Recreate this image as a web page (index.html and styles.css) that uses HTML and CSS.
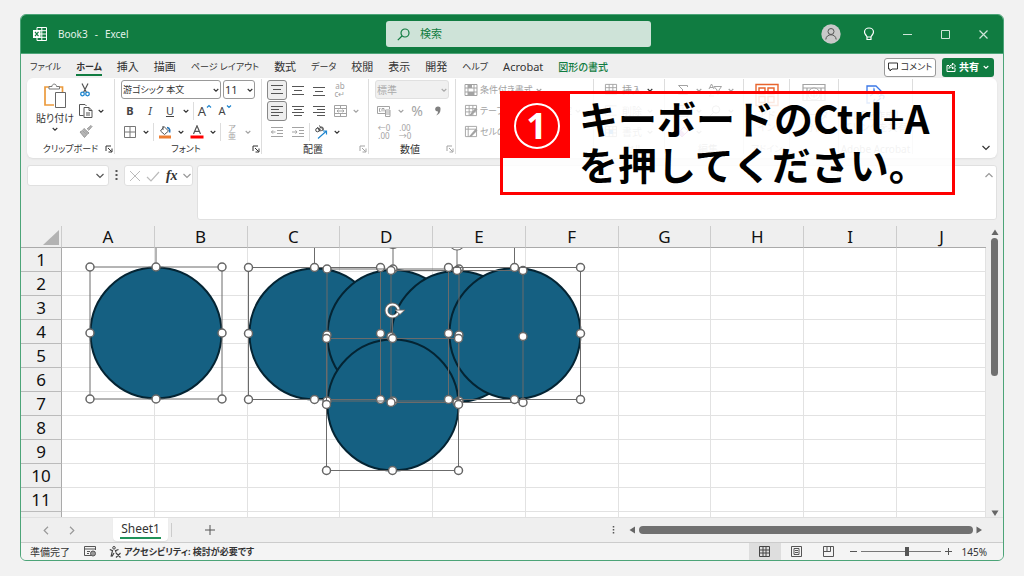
FILE: index.html
```html
<!DOCTYPE html>
<html lang="ja">
<head>
<meta charset="utf-8">
<meta name="viewport" content="width=device-width, initial-scale=1">
<title>Book3 - Excel</title>
<link rel="stylesheet" href="styles.css">
</head>
<body>
<svg class="defs" aria-hidden="true">
  <defs>
    <symbol id="chev" viewBox="0 0 8 8"><path d="M1.700 3 4 5.200 6.300 3" fill="none" stroke="currentColor" stroke-width="1.100"/></symbol>
    <symbol id="launch" viewBox="0 0 8 8"><path d="M1 6V1h5M3 3l3.600 3.600M7 3.500V7H3.500" fill="none" stroke="currentColor" stroke-width="1"/></symbol>
    <symbol id="table" viewBox="0 0 14 14"><path d="M1 1.500h12v11H1zM1 5h12M1 8.500h12M5 1.500v11M9 1.500v11" fill="none" stroke="currentColor"/></symbol>
    <g id="frame">
      <path d="M66-21V0M0 0h132v132H0z" class="frame-line"/>
      <circle cx="66" cy="-28" r="6" class="rotor"/>
      <circle cx="66" cy="-28" r="6" class="rotor-in"/>
      <g class="handle">
        <circle r="4"/><circle cx="66" r="4"/><circle cx="132" r="4"/>
        <circle cy="66" r="4"/><circle cx="132" cy="66" r="4"/>
        <circle cy="132" r="4"/><circle cx="66" cy="132" r="4"/><circle cx="132" cy="132" r="4"/>
      </g>
    </g>
  </defs>
</svg>

<div class="window">
  <header class="titlebar">
    <div class="doc">
      <svg width="14" height="14" viewBox="0 0 14 14"><path d="M4 .5h9.500v13H4zM4 3.700h9.500M4 7h9.500M4 10.300h9.500M8.800.5v13" fill="none" stroke="#fff"/><path d="M0 3h7.500v8H0z" fill="#fff"/><path d="m2 4.800 3.500 4.400M5.500 4.800 2 9.200" stroke="#107c41" stroke-width="1.200"/></svg>
      <span>Book3</span><span>-</span><span>Excel</span>
    </div>
    <label class="search">
      <svg width="13" height="13" viewBox="0 0 13 13"><circle cx="8" cy="5" r="4" fill="none" stroke="currentColor" stroke-width="1.200"/><path d="M5 8 .8 12.200" stroke="currentColor" stroke-width="1.200"/></svg>
      <input type="search" placeholder="検索" aria-label="検索">
    </label>
    <div class="winbtns">
      <button aria-label="アカウント"><svg width="20" height="20" viewBox="0 0 20 20"><circle cx="10" cy="10" r="9.700" fill="#c9c9c9"/><circle cx="10" cy="7.500" r="3" fill="none" stroke="#555"/><path d="M4.800 15.500c.4-6.300 10-6.300 10.400 0" fill="none" stroke="#555"/></svg></button>
      <button aria-label="ヒント"><svg width="12" height="15" viewBox="0 0 12 15"><path d="M4 10C3.800 8.500 1.500 7.500 1.500 5a4.500 4 0 0 1 9 0c0 2.500-2.300 3.500-2.500 5zM4 10v2.500h4V10" fill="none" stroke="#fff" stroke-width="1.200"/></svg></button>
      <button aria-label="最小化"><svg width="9" height="9"><path d="M0 4.500h9" stroke="#cfe5d9"/></svg></button>
      <button aria-label="最大化"><svg width="9" height="9"><path d="M.5.500h8v8h-8z" fill="none" stroke="#cfe5d9"/></svg></button>
      <button aria-label="閉じる"><svg width="9" height="9"><path d="m.5.500 8 8m0-8-8 8" stroke="#cfe5d9" stroke-width="1.200"/></svg></button>
    </div>
  </header>

  <nav class="tabs">
    <a href="#" class="kana">ファイル</a><a href="#" class="kana on">ホーム</a><a href="#">挿入</a><a href="#">描画</a><a href="#" class="kana">ページ レイアウト</a><a href="#">数式</a><a href="#" class="kana">データ</a><a href="#">校閲</a><a href="#">表示</a><a href="#">開発</a><a href="#" class="kana">ヘルプ</a><a href="#" class="latin">Acrobat</a><a href="#" class="ctx">図形の書式</a>
    <div class="tab-actions">
      <button class="comment"><svg width="10" height="10" viewBox="0 0 10 10"><path d="M.5 1h9v6H4L2 9V7H.5z" fill="none" stroke="currentColor"/></svg>コメント</button>
      <button class="share"><svg width="10" height="10" viewBox="0 0 10 10"><path d="M3 3.500H1v6h8V6M3 6.500c0-2.500 1.500-3.500 3.500-3.500V1l3 3-3 3V5C5 5 4 5.300 3 6.500z" fill="none" stroke="currentColor"/></svg>共有<svg width="8" height="8"><use href="#chev"/></svg></button>
    </div>
  </nav>

  <section class="ribbon" aria-label="ホーム">
    <div class="group clip">
      <div class="clip-body">
        <button class="paste">
          <svg width="24" height="26" viewBox="0 0 24 26"><path d="M6 4H2v18h9M16 4h3.500v5" fill="none" stroke="#eb9a3c" stroke-width="1.700"/><path d="M6 6V3.500h3C9 .300 13.500.300 13.500 3.500h3V6z" fill="#fff" stroke="#777"/><path d="M12.500 9.500h10v15h-10z" fill="#fff" stroke="#666"/></svg>
          <span>貼り付け</span>
          <svg width="8" height="8"><use href="#chev"/></svg>
        </button>
        <div class="clip-tools">
          <button aria-label="切り取り"><svg width="12" height="14" viewBox="0 0 12 14"><path d="m3 .5 4.500 9M9 .5l-4.500 9" stroke="#555" stroke-width="1.200"/><circle cx="3.500" cy="11" r="1.800" fill="none" stroke="#1f86cf" stroke-width="1.300"/><circle cx="8.500" cy="11" r="1.800" fill="none" stroke="#1f86cf" stroke-width="1.300"/></svg></button>
          <button aria-label="コピー"><svg width="14" height="14" viewBox="0 0 14 14"><path d="M4.500 11.500h-4v-11H6l1.500 1.500M5 3.500h5l3 3v7H5zM10 3.500v3h3M7 9h4M7 11h4" fill="none" stroke="#555"/></svg><svg width="8" height="8"><use href="#chev"/></svg></button>
          <button aria-label="書式のコピー" class="off"><svg width="14" height="13" viewBox="0 0 14 13"><path d="m8 4 4-3.500 1 1L9.500 5.500M5 3.500l5 4.500-1.500 1L4 4.600zM3.500 5.500 1 7l4.500 5.500L8 9.500z" fill="#b5b5b5" stroke="#999"/></svg></button>
        </div>
      </div>
      <div class="caption"><span class="kana">クリップボード</span><button aria-label="クリップボードの設定"><svg width="8" height="8"><use href="#launch"/></svg></button></div>
    </div>

    <div class="group font">
      <div class="row selects">
        <span class="drop wide"><select aria-label="フォント"><option>游ゴシック 本文</option></select><svg width="8" height="8"><use href="#chev"/></svg></span>
        <span class="drop size"><select aria-label="フォント サイズ"><option>11</option></select><svg width="8" height="8"><use href="#chev"/></svg></span>
      </div>
      <div class="row">
        <button class="b letter"><b>B</b></button><button class="b letter"><i>I</i></button><button class="b letter"><u>U</u></button><button class="v" aria-label="下線の種類"><svg width="8" height="8"><use href="#chev"/></svg></button>
        <i class="sep"></i>
        <button class="b letter big" aria-label="拡大">A<svg width="6" height="10" viewBox="0 0 6 10"><path d="m1 3.500 2-2 2 2" fill="none" stroke="#1f86cf" stroke-width="1.200"/></svg></button><button class="b letter" aria-label="縮小">A<svg width="6" height="10" viewBox="0 0 6 10"><path d="m1 1.500 2 2 2-2" fill="none" stroke="#1f86cf" stroke-width="1.200"/></svg></button>
      </div>
      <div class="row">
        <button class="b" aria-label="罫線"><svg width="12" height="12"><path d="M.5.500h11v11H.5zM6 .5v11M.5 6h11" fill="none" stroke="#777"/></svg></button><button class="v" aria-label="罫線の種類"><svg width="8" height="8"><use href="#chev"/></svg></button>
        <i class="sep"></i>
        <button class="b" aria-label="塗りつぶし"><svg width="14" height="14" viewBox="0 0 14 14"><path d="M6 1.500 10.500 6l-4 3.500L2.500 6zM5 1v4" fill="none" stroke="#555"/><path d="M9 2.500c3 .5 3 3 2.500 5" fill="none" stroke="#1f6fb5" stroke-width="1.600"/><path d="M1 10.500h12v3H1z" fill="#ed7d31"/></svg></button><button class="v" aria-label="塗りつぶしの色"><svg width="8" height="8"><use href="#chev"/></svg></button>
        <button class="b" aria-label="フォントの色"><svg width="14" height="14" viewBox="0 0 14 14"><path d="M3.500 9 7 .8 10.500 9M4.700 6.300h4.600" fill="none" stroke="#555" stroke-width="1.200"/><path d="M.5 10.500h13v3H.5z" fill="#f00"/></svg></button><button class="v" aria-label="色の種類"><svg width="8" height="8"><use href="#chev"/></svg></button>
        <i class="sep"></i>
        <button class="b off ruby"><span>ア</span><span>亜</span></button><button class="v off" aria-label="ふりがな"><svg width="8" height="8"><use href="#chev"/></svg></button>
      </div>
      <div class="caption"><span class="kana">フォント</span><button aria-label="フォントの設定"><svg width="8" height="8"><use href="#launch"/></svg></button></div>
    </div>

    <div class="group align">
      <div class="row">
        <button class="b on" aria-label="上揃え"><svg width="12" height="12"><path d="M0 1.500h12M2 5.500h8M0 9.500h12" stroke="#555"/></svg></button><button class="b" aria-label="中央揃え"><svg width="12" height="12"><path d="M0 2.500h12M2 6.500h8M0 10.500h12" stroke="#555"/></svg></button><button class="b" aria-label="下揃え"><svg width="12" height="12"><path d="M0 3.500h12M2 7.500h8M0 11.500h12" stroke="#555"/></svg></button><button class="b off wrap"><span>ab</span><span>c↵</span></button>
      </div>
      <div class="row">
        <button class="b on" aria-label="左揃え"><svg width="12" height="12"><path d="M0 1.500h12M0 4.500h8M0 7.500h12M0 10.500h8" stroke="#555"/></svg></button><button class="b" aria-label="横中央揃え"><svg width="12" height="12"><path d="M0 1.500h12M2 4.500h8M0 7.500h12M2 10.500h8" stroke="#555"/></svg></button><button class="b" aria-label="右揃え"><svg width="12" height="12"><path d="M0 1.500h12M4 4.500h8M0 7.500h12M4 10.500h8" stroke="#555"/></svg></button><button class="b off" aria-label="セルを結合"><svg width="13" height="12"><path d="M.5.500h12v11H.5zM.5 3.500h12M.5 8.500h12M6.500.500v3M6.500 8.500v3M3 6h7M4.500 4.700 3 6l1.500 1.300M8.500 4.700 10 6 8.500 7.300" fill="none" stroke="currentColor"/></svg></button><button class="v off" aria-label="結合の種類"><svg width="8" height="8"><use href="#chev"/></svg></button>
      </div>
      <div class="row">
        <button class="b off" aria-label="インデント解除"><svg width="12" height="12"><path d="M0 1.500h12M6 4.500h6M6 7.500h6M0 10.500h12M0 6h4.500M2 4.300.500 6 2 7.700" fill="none" stroke="currentColor"/></svg></button><button class="b off" aria-label="インデント"><svg width="12" height="12"><path d="M0 1.500h12M7 4.500h5M7 7.500h5M0 10.500h12M0 6h5M3.500 4.300 5 6 3.500 7.700" fill="none" stroke="currentColor"/></svg></button>
        <i class="sep"></i>
        <button class="b" aria-label="方向"><svg width="14" height="14" viewBox="0 0 14 14"><circle cx="3.500" cy="5" r="1.800" fill="none" stroke="#444"/><circle cx="7.500" cy="3.800" r="1.800" fill="none" stroke="#444"/><path d="m3.500 2 2.500 4.500M5 .5l4.500 4.300" stroke="#444"/><path d="M4 13.500 12.500 6M9 6h3.500v3.500" fill="none" stroke="#1f86cf" stroke-width="1.200"/></svg></button><button class="v" aria-label="方向の種類"><svg width="8" height="8"><use href="#chev"/></svg></button>
      </div>
      <div class="caption"><span>配置</span><button class="off" aria-label="配置の設定"><svg width="8" height="8"><use href="#launch"/></svg></button></div>
    </div>

    <div class="group number">
      <div class="row selects">
        <span class="drop full disabled"><select aria-label="表示形式" disabled><option>標準</option></select><svg width="8" height="8"><use href="#chev"/></svg></span>
      </div>
      <div class="row">
        <button class="b off" aria-label="通貨"><svg width="14" height="12" viewBox="0 0 14 12"><path d="M8 8.500H.5v-7h12V4M3.500 3.500h-1v3h1M5 6.500v-3h2v3M8.500 5h4.500v6.500H8.500zM8.500 7H13M8.500 9H13" fill="none" stroke="currentColor"/></svg></button><button class="v off" aria-label="通貨の種類"><svg width="8" height="8"><use href="#chev"/></svg></button><button class="b off percent">%</button><button class="b off" aria-label="桁区切り"><svg width="8" height="12" viewBox="0 0 8 12"><path d="M4 1.500a2.500 2.500 0 0 1 2.500 2.800C6.500 7.500 5 9.500 2 10.500 3.500 9 4 7.800 4 6.500 0 6.500.500 1.500 4 1.500z" fill="#808080"/></svg></button>
      </div>
      <div class="row">
        <button class="b off dec"><span>←0</span><span>.00</span></button><button class="b off dec"><span>.00</span><span>→0</span></button>
      </div>
      <div class="caption"><span>数値</span><button class="off" aria-label="数値の設定"><svg width="8" height="8"><use href="#launch"/></svg></button></div>
    </div>

    <div class="group styles off">
      <button class="row cmd"><svg width="14" height="12" viewBox="0 0 14 12"><path d="M1 .5h12v11H1zM1 4h12M1 8h12M4 .5v11M10 .5v11" fill="none" stroke="currentColor"/><path d="M4 1h4v3H4zM4 8h6v3H4z" fill="currentColor"/></svg><span class="kana">条件付き書式</span><svg width="8" height="8"><use href="#chev"/></svg></button>
      <button class="row cmd"><svg width="14" height="13" viewBox="0 0 14 14"><use href="#table"/><path d="m5 12 7-8 2 2-7 7z" fill="currentColor"/></svg><span class="kana">テーブルとして書式設定</span><svg width="8" height="8"><use href="#chev"/></svg></button>
      <button class="row cmd"><svg width="14" height="13" viewBox="0 0 14 14"><path d="M1 1.500h12v11H1zM1 4.500h12M4 1.500v11" fill="none" stroke="currentColor"/><path d="m5 12 7-8 2 2-7 7z" fill="currentColor"/></svg><span class="kana">セルのスタイル</span><svg width="8" height="8"><use href="#chev"/></svg></button>
      <div class="caption"><span class="kana">スタイル</span></div>
    </div>

    <div class="group cells off">
      <button class="row cmd dark"><svg width="14" height="13"><use href="#table"/></svg><span>挿入</span><svg width="8" height="8"><use href="#chev"/></svg></button>
      <button class="row cmd"><svg width="14" height="13" viewBox="0 0 14 14"><path d="M1 2h12M1 12h12M1 2v10M4 5l5 5m0-5-5 5" stroke="currentColor"/></svg><span>削除</span><svg width="8" height="8"><use href="#chev"/></svg></button>
      <button class="row cmd"><svg width="14" height="13"><use href="#table"/><path d="M5 5h4v4H5z" fill="#5ba3e0"/></svg><span>書式</span><svg width="8" height="8"><use href="#chev"/></svg></button>
      <div class="caption"><span class="kana">セル</span></div>
    </div>

    <div class="group edit off">
      <div class="row"><button class="b" aria-label="合計"><svg width="12" height="12"><path d="M10.500 3V1.500h-9L6 6l-4.500 4.500h9V9" fill="none" stroke="currentColor"/></svg></button><button class="v" aria-label="合計の種類"><svg width="8" height="8"><use href="#chev"/></svg></button><button class="b" aria-label="並べ替え"><svg width="14" height="14"><path d="m1 6 2.500-5L6 6M2 4.500h3M1 8.500h5L1 13h5M6 3.500h7.500L11 7v4H9V7z" fill="none" stroke="currentColor"/></svg></button><button class="v" aria-label="フィルター"><svg width="8" height="8"><use href="#chev"/></svg></button></div>
      <div class="row"><button class="b" aria-label="フィル"><svg width="12" height="12"><path d="M1 .5h10v11H1zM6 2v7M3.500 6.500 6 9l2.500-2.500" fill="none" stroke="currentColor"/></svg></button><button class="v" aria-label="フィルの種類"><svg width="8" height="8"><use href="#chev"/></svg></button><button class="b" aria-label="検索と選択"><svg width="12" height="12"><circle cx="7" cy="4.500" r="3.700" fill="none" stroke="currentColor"/><path d="m4.500 7.500-4 4" stroke="currentColor"/></svg></button><button class="v" aria-label="選択の種類"><svg width="8" height="8"><use href="#chev"/></svg></button></div>
      <div class="row"><button class="b" aria-label="クリア"><svg width="12" height="12"><path d="m1 7 6-6 4 4-6 6z" fill="none" stroke="#b54bbf"/><path d="m1 7 3-3 4 4-3 3z" fill="#c98bd0"/></svg></button><button class="v" aria-label="クリアの種類"><svg width="8" height="8"><use href="#chev"/></svg></button></div>
      <div class="caption"><span>編集</span></div>
    </div>

    <div class="group addin off">
      <button class="tall"><svg width="24" height="24" viewBox="0 0 24 24"><path d="M1 1.500h22v21H1zM4 5h6v6H4zM13 5h6v6h-6zM4 13.500h6v6H4zM13 13.500h6v6h-6z" fill="none" stroke="#e8642c" stroke-width="1.400"/></svg><span>アド<br>イン</span></button>
      <div class="caption"><span class="kana">アドイン</span></div>
    </div>

    <div class="group analyze off">
      <button class="tall"><svg width="24" height="24" viewBox="0 0 24 24"><path d="M1 1.500h22v16H1zM1 5h22M5 5v12M19 5v12" fill="none" stroke="currentColor" stroke-width="1.200"/><circle cx="12" cy="11" r="6" fill="#fff" stroke="currentColor"/><path d="M9 9h6v4H9zM12 7v8" fill="none" stroke="currentColor"/></svg><span>データ<br>分析</span></button>
      <div class="caption"></div>
    </div>

    <div class="group adobe off">
      <button class="tall"><svg width="24" height="24" viewBox="0 0 24 24"><path d="M6 20H3V3h9l5 5v4M6 13c3-1 5-5 4-7-1 3 2 5 5 5" fill="none" stroke="#3b78e7" stroke-width="1.300"/><path d="m12 19 5-4m-6 1c-3 3 0 7 3 4m1-6c3-4 7-1 4 2" fill="none" stroke="#3b78e7" stroke-width="1.300"/></svg><span>PDFを作成し<br>てリンクを共有</span></button>
      <div class="caption"><span class="latin">Adobe Acrobat</span></div>
    </div>

    <button class="collapse" aria-label="リボンを折りたたむ"><svg width="10" height="8" viewBox="0 0 10 8"><path d="m1.500 2 3.500 3.500L8.500 2" fill="none" stroke="currentColor" stroke-width="1.200"/></svg></button>
  </section>

  <section class="formula">
    <div class="box namebox"><input aria-label="名前ボックス"><svg width="10" height="8" viewBox="0 0 10 8"><path d="m1.500 2 3.500 3.500L8.500 2" fill="none" stroke="#555" stroke-width="1.200"/></svg></div>
    <svg class="dots" width="3" height="12"><path d="M1.500 1v11" stroke="#555" stroke-width="2" stroke-dasharray="2 2"/></svg>
    <div class="box fxbox">
      <button aria-label="キャンセル"><svg width="12" height="12"><path d="m1 1 10 10M11 1 1 11" stroke="#bbb"/></svg></button>
      <button aria-label="入力"><svg width="14" height="12"><path d="m1 7 4 4 8-9" fill="none" stroke="#bbb" stroke-width="1.200"/></svg></button>
      <button class="fx">fx</button>
      <svg width="8" height="8" viewBox="0 0 8 8"><path d="m.5 2 3.500 3.500L7.500 2" fill="none" stroke="#999" stroke-width="1.200"/></svg>
    </div>
    <div class="box entry"><textarea aria-label="数式バー"></textarea><svg width="10" height="8" viewBox="0 0 10 8"><path d="m1.500 6 3.500-3.500L8.500 6" fill="none" stroke="#999" stroke-width="1.200"/></svg></div>
  </section>

  <main class="sheet">
    <div class="canvas">
      <table>
        <thead><tr><th class="corner"><svg width="16" height="15"><path d="M16 0v15H0z" fill="#b3b3b3"/></svg></th><th>A</th><th>B</th><th>C</th><th>D</th><th>E</th><th>F</th><th>G</th><th>H</th><th>I</th><th class="last">J</th></tr></thead>
        <tbody>
          <tr><th>1</th><td></td><td></td><td></td><td></td><td></td><td></td><td></td><td></td><td></td><td></td></tr>
          <tr><th>2</th><td></td><td></td><td></td><td></td><td></td><td></td><td></td><td></td><td></td><td></td></tr>
          <tr><th>3</th><td></td><td></td><td></td><td></td><td></td><td></td><td></td><td></td><td></td><td></td></tr>
          <tr><th>4</th><td></td><td></td><td></td><td></td><td></td><td></td><td></td><td></td><td></td><td></td></tr>
          <tr><th>5</th><td></td><td></td><td></td><td></td><td></td><td></td><td></td><td></td><td></td><td></td></tr>
          <tr><th>6</th><td></td><td></td><td></td><td></td><td></td><td></td><td></td><td></td><td></td><td></td></tr>
          <tr><th>7</th><td></td><td></td><td></td><td></td><td></td><td></td><td></td><td></td><td></td><td></td></tr>
          <tr><th>8</th><td></td><td></td><td></td><td></td><td></td><td></td><td></td><td></td><td></td><td></td></tr>
          <tr><th>9</th><td></td><td></td><td></td><td></td><td></td><td></td><td></td><td></td><td></td><td></td></tr>
          <tr><th>10</th><td></td><td></td><td></td><td></td><td></td><td></td><td></td><td></td><td></td><td></td></tr>
          <tr><th>11</th><td></td><td></td><td></td><td></td><td></td><td></td><td></td><td></td><td></td><td></td></tr>
          <tr><th></th><td></td><td></td><td></td><td></td><td></td><td></td><td></td><td></td><td></td><td></td></tr>
        </tbody>
      </table>
      <svg class="shapes" role="img" aria-label="選択された円">
        <g class="disc">
          <circle cx="95" cy="85" r="65.500"/>
          <circle cx="254" cy="86" r="65.500"/>
          <circle cx="332" cy="87.500" r="65.500"/>
          <circle cx="396" cy="88.500" r="65.500"/>
          <circle cx="454" cy="85.500" r="65.500"/>
          <circle cx="332" cy="157" r="65.500"/>
        </g>
        <use href="#frame" x="29" y="19"/>
        <use href="#frame" x="187.500" y="19.500"/>
        <use href="#frame" x="266" y="21"/>
        <use href="#frame" x="330" y="22.500"/>
        <use href="#frame" x="387.500" y="19.500"/>
        <use href="#frame" x="265.500" y="90.500"/>
        <path d="M334 62h10l-5 4.500z" class="rotor-tip"/>
      </svg>
    </div>
    <div class="vscroll">
      <button aria-label="上へ"><svg width="8" height="7"><path d="M4 .5 7.500 6h-7z" fill="#666"/></svg></button>
      <div class="vtrack"><div class="vthumb"></div></div>
      <button aria-label="下へ"><svg width="8" height="7"><path d="M4 6 .5.500h7z" fill="#666"/></svg></button>
    </div>
  </main>

  <footer class="sheetbar">
    <div class="sheetnav">
      <button aria-label="前のシート"><svg width="6" height="9"><path d="M5 .8 1.200 4.500 5 8.200" fill="none" stroke="#999" stroke-width="1.200"/></svg></button>
      <button aria-label="次のシート"><svg width="6" height="9"><path d="m1 .8 3.800 3.700L1 8.200" fill="none" stroke="#999" stroke-width="1.200"/></svg></button>
    </div>
    <button class="sheettab"><span>Sheet1</span></button>
    <i class="tabsep"></i>
    <button class="add" aria-label="新しいシート"><svg width="10" height="10"><path d="M5 0v10M0 5h10" stroke="#555"/></svg></button>
    <svg class="dots" width="3" height="10"><path d="M1.500 1v9" stroke="#555" stroke-width="1.500" stroke-dasharray="1.500 1.500"/></svg>
    <div class="hscroll">
      <button aria-label="左へ"><svg width="7" height="8"><path d="M.5 4 6 .5v7z" fill="#666"/></svg></button>
      <div class="hthumb"></div>
      <button aria-label="右へ"><svg width="7" height="8"><path d="M6 4 .5.500v7z" fill="#666"/></svg></button>
    </div>
  </footer>

  <footer class="status">
    <span class="ready">準備完了</span>
    <svg width="12" height="11" viewBox="0 0 12 11"><path d="M7 9.500H.5v-9h11V4M.5 3h11M3 5.500h3M3 7.500h2" fill="none" stroke="#555"/><circle cx="9" cy="7.500" r="2.500" fill="#999" stroke="#555"/></svg>
    <button class="access"><svg width="12" height="12" viewBox="0 0 12 12"><circle cx="5" cy="1.800" r="1.300" fill="none" stroke="#444"/><path d="m.8 3.500 2.700 1.200-1.500 6M9.500 3.500 6.500 4.700l.5 1.800M3 10.500l2-3.500M7 7l4.500 4.500M11.500 7 7 11.500" fill="none" stroke="#444" stroke-width="1.200"/></svg><span>アクセシビリティ: 検討が必要です</span></button>
    <div class="views">
      <button class="on" aria-label="標準"><svg width="12" height="11"><path d="M.5.500h10v10H.5zM.5 4h10M.5 7h10M4 .5v10M7 .5v10" fill="none" stroke="#444"/></svg></button>
      <button aria-label="ページ レイアウト"><svg width="11" height="11"><path d="M.5.500h10v10H.5zM3 2.500h5v6H3zM4 4.500h3M4 6.500h3" fill="none" stroke="#555"/></svg></button>
      <button aria-label="改ページ プレビュー"><svg width="11" height="11"><path d="M.5.500h10v10H.5zM4 .5v5M7.500.500v5M.5 5.500h7" fill="none" stroke="#555"/></svg></button>
    </div>
    <div class="zoom">
      <button aria-label="縮小"><svg width="7" height="7"><path d="M0 3.500h7" stroke="#555"/></svg></button>
      <input type="range" min="0" max="100" value="58" aria-label="ズーム">
      <button aria-label="拡大"><svg width="7" height="7"><path d="M0 3.500h7M3.500 0v7" stroke="#555"/></svg></button>
      <span>145%</span>
    </div>
  </footer>

  <aside class="callout">
    <div class="step"><span>1</span></div>
    <p>キーボードのCtrl<span class="plus">+</span>A<br>を押してください。</p>
  </aside>
</div>
</body>
</html>
```

FILE: styles.css
```css
* { box-sizing: border-box; }

body {
  margin: 0;
  height: 100vh;
  padding: 14px 20px;
  background: #f2f2f2;
  color: #333;
  font-family: "Noto Sans", "Noto Sans CJK JP", sans-serif;
  font-size: 10px;
  line-height: 14px;
  font-feature-settings: "palt";
}

button, input, select, textarea {
  margin: 0;
  padding: 0;
  border: 0;
  background: none;
  color: inherit;
  font: inherit;
  font-feature-settings: inherit;
}

svg { display: block; flex: none; }
a { color: inherit; text-decoration: none; }

.defs { position: absolute; width: 0; height: 0; }

.window {
  position: relative;
  display: flex;
  flex-direction: column;
  height: 100%;
  max-height: 547px;
  overflow: hidden;
  border: 1px solid #4ca478;
  border-radius: 6px;
  background: #efefef;
}

/* Title bar */
.titlebar {
  display: grid;
  grid-template-columns: 365fr 265fr 352fr;
  align-items: center;
  height: 39px;
  flex: none;
  background: #107c41;
  border-bottom: 1px solid #4ca478;
  color: #e4f2ea;
}
.doc { display: flex; align-items: center; gap: 7px; padding-left: 12px; }
.doc svg { margin-right: 4px; }
.search {
  display: flex;
  align-items: center;
  gap: 10px;
  height: 26px;
  padding-left: 11px;
  border-radius: 3px;
  background: #cee3d8;
  color: #107c41;
  font-size: 11px;
}
.search input { width: 100%; outline: 0; }
.search input::placeholder { color: #107c41; opacity: 1; }
.winbtns { display: flex; justify-content: flex-end; padding-right: 1px; }
.winbtns button { display: grid; place-items: center; width: 38px; height: 30px; }

/* Ribbon tabs */
.tabs {
  display: flex;
  align-items: center;
  gap: 15px;
  height: 24px;
  flex: none;
  padding: 2px 9px 0;
  font-size: 11px;
}
.tabs a { white-space: nowrap; }
.kana { font-size: 9px; }
.latin { font-size: 10px; }
.tabs .latin { font-size: 11px; }
.tabs .on { font-weight: 700; border-bottom: 2px solid #107c41; padding-top: 2px; }
.tabs .ctx { color: #107c41; font-size: 10px; font-weight: 500; }
.tab-actions { display: flex; gap: 6px; margin-left: auto; font-size: 10px; }
.tab-actions button {
  display: flex;
  align-items: center;
  justify-content: center;
  gap: 3px;
  width: 52px;
  height: 19px;
  border-radius: 3px;
  white-space: nowrap;
}
.tab-actions .comment { border: 1px solid #999; background: #fff; font-size: 9px; }
.tab-actions .share { background: #107c41; color: #fff; font-weight: 700; }

/* Ribbon */
.ribbon {
  display: flex;
  height: 80px;
  flex: none;
  margin: 0 6px;
  padding-top: 1px;
  border-radius: 6px;
  background: #fff;
  box-shadow: 0 1px 2px #ddd;
}
.group {
  display: flex;
  flex-direction: column;
  flex: none;
  border-right: 1px solid #ddd;
  margin-bottom: 4px;
}
.off { color: #a3a3a3; }
.row { display: flex; align-items: center; height: 21px; flex: none; }
.b { display: flex; align-items: center; justify-content: center; width: 20px; height: 20px; flex: none; }
.v { display: grid; place-items: center; width: 12px; height: 20px; flex: none; }
.b.on { border: 1px solid #888; border-radius: 3px; background: #eee; }
.sep { width: 1px; height: 18px; margin: 0 1px; background: #ddd; }
.caption {
  display: flex;
  align-items: center;
  height: 10px;
  margin-top: auto;
}
.caption span { flex: 1; text-align: center; white-space: nowrap; }
.caption button { width: 9px; }

.clip { width: 88px; padding-left: 9px; }
.clip-body { display: flex; height: 63px; }
.paste {
  display: flex;
  flex-direction: column;
  align-items: center;
  width: 38px;
  padding-top: 4px;
  white-space: nowrap;
}
.paste span { margin-top: 2px; }
.clip-tools { display: flex; flex-direction: column; padding-left: 3px; }
.clip-tools button { display: flex; align-items: center; height: 21px; gap: 4px; padding-left: 2px; }

.font { width: 147px; padding-left: 5px; }
.selects { gap: 2px; padding-left: 1px; }
.drop { display: grid; align-items: center; height: 19px; }
.drop > * { grid-area: 1 / 1; }
.drop svg { justify-self: end; margin-right: 1px; pointer-events: none; }
.drop select {
  appearance: none;
  width: 100%;
  height: 19px;
  padding: 0 1px;
  border: 1px solid #999;
  border-radius: 3px;
  opacity: 1;
}
.wide { width: 100px; }
.wide select { font-size: 9px; }
.size { width: 32px; }
.full { width: 74px; }
.size select { font-size: 11px; }
.disabled { color: #aaa; }
.disabled select { border-color: #e0e0e0; background: #f0f0f0; color: #aaa; }
.letter { font-size: 11px; color: #444; }
.letter svg { align-self: flex-start; margin-top: 3px; }
.letter.big { font-size: 13px; }
.ruby, .wrap, .dec { flex-direction: column; font-size: 8px; line-height: 8px; }

.align { width: 107px; padding-left: 5px; }
.align .b + .b { margin-left: 1px; }
.number { width: 87px; padding-left: 5px; }
.number .b { margin-right: 1px; }
.percent { font-size: 14px; }
.styles { width: 138px; padding-left: 8px; }
.cmd { gap: 2px; white-space: nowrap; }
.cells { width: 71px; padding-left: 10px; }
.cells .cmd { gap: 4px; }
.dark svg:last-child { color: #333; }
.edit { width: 79px; padding-left: 8px; }
.tall {
  display: flex;
  flex-direction: column;
  align-items: center;
  gap: 2px;
  padding-top: 4px;
  line-height: 12px;
  white-space: nowrap;
}
.addin { width: 46px; }
.analyze { width: 49px; }
.adobe { width: 74px; }
.collapse { margin: auto 6px 6px auto; color: #333; }

/* Formula bar */
.formula { display: flex; gap: 4px; flex: none; height: 55px; margin: 7px 6px 6px; }
.box {
  display: flex;
  align-items: center;
  border: 1px solid #e0e0e0;
  border-radius: 3px;
  background: #fff;
}
.namebox { width: 82px; height: 21px; padding-right: 3px; }
.namebox input { width: 100%; min-width: 0; outline: 0; }
.formula .dots { margin: 4px 2px 0; }
.fxbox { width: 69px; height: 21px; justify-content: space-between; padding: 0 1px 0 4px; }
.fx { font: italic 700 14px/16px "Liberation Serif", serif; }
.entry { flex: 1; align-items: flex-start; }
.entry textarea { flex: 1; height: 100%; resize: none; outline: 0; }
.entry svg { margin: 5px 2px 0; }

/* Sheet */
.sheet { display: flex; flex: 1; min-height: 0; }
.canvas { position: relative; flex: 1; min-width: 0; overflow: hidden; }
.sheet table {
  width: 100%;
  table-layout: fixed;
  border-collapse: separate;
  border-spacing: 0;
  color: #111;
  font-size: 17px;
  line-height: 20px;
}
.sheet th, .sheet td { padding: 0; }
.sheet th { font-weight: 400; }
.sheet thead th { height: 22px; border-right: 1px solid #ccc; border-bottom: 1px solid #aaa; }
.sheet .corner { width: 41px; }
.sheet .corner svg { margin: 1px 0 0 22px; }
.sheet .last { width: 89px; border-right: 0; }
.sheet tbody th { height: 24px; border-right: 1px solid #aaa; border-bottom: 1px solid #bbb; }
.sheet td { background: #fff; border-right: 1px solid #e2e2e2; border-bottom: 1px solid #e2e2e2; }
.shapes { position: absolute; left: 40px; top: 22px; width: calc(100% - 40px); height: calc(100% - 22px); overflow: hidden; }
.disc { fill: #156082; stroke: #042433; stroke-width: 2; }
.frame-line { fill: none; stroke: #6b6b6b; stroke-width: 1; }
.handle { fill: #fff; stroke: #666; stroke-width: 1.5; }
.rotor { fill: none; stroke: #666; stroke-width: 4; }
.rotor-in { fill: none; stroke: #fff; stroke-width: 2; }
.rotor-tip { fill: #fff; stroke: #666; stroke-width: 1; }

.vscroll { display: flex; flex-direction: column; align-items: center; width: 17px; padding: 3px 0 0; }
.vtrack { flex: 1; padding: 2px 0; }
.vthumb { width: 7px; height: 51%; border-radius: 4px; background: #707070; }

/* Sheet tabs */
.sheetbar { display: flex; align-items: center; height: 25px; flex: none; border-top: 1px solid #e0e0e0; }
.sheetnav { display: flex; gap: 20px; width: 92px; padding-left: 22px; }
.sheettab {
  width: 55px;
  height: 23px;
  align-self: flex-start;
  border-radius: 0 0 4px 4px;
  background: #fff;
  font-size: 12px;
  box-shadow: 0 1px 1px #ddd;
}
.sheettab span { display: inline-block; border-bottom: 2px solid #21925a; line-height: 16px; padding: 0 1px; }
.tabsep { width: 1px; height: 14px; margin-left: 3px; background: #ccc; }
.add { margin-left: 33px; }
.sheetbar .dots { margin-left: auto; }
.hscroll { display: flex; align-items: center; gap: 3px; width: 36%; margin: 0 20px 0 14px; }
.hthumb { flex: 1; height: 8px; border-radius: 4px; background: #707070; }

/* Status bar */
.status { display: flex; align-items: center; height: 18px; flex: none; padding-left: 9px; border-top: 1px solid #ccc; background: #f4f4f4; }
.ready { margin-right: 14px; }
.access { display: flex; align-items: center; gap: 3px; margin-left: 13px; font-weight: 700; font-size: 9px; }
.views { display: flex; margin-left: auto; }
.views button { display: grid; place-items: center; width: 32px; height: 17px; }
.views .on { background: #dedede; }
.zoom { display: flex; align-items: center; gap: 4px; margin: 0 16px 0 5px; }
.zoom span { margin-left: 6px; }
.zoom input { appearance: none; width: 80px; height: 10px; background: linear-gradient(#777, #777) center / 100% 1px no-repeat; }
.zoom input::-webkit-slider-thumb { appearance: none; width: 4px; height: 9px; background: #555; }

/* Instruction callout */
.callout {
  position: absolute;
  left: 479px;
  top: 76px;
  display: flex;
  width: 455px;
  height: 104px;
  border: 3px solid #f00;
  background: rgba(255, 255, 255, 0.86);
  color: #000;
}
.step { display: grid; place-items: center; width: 67px; height: 64px; flex: none; background: #f00; }
.step span {
  display: grid;
  place-items: center;
  width: 46px;
  height: 46px;
  border: 2px solid #fff;
  border-radius: 50%;
  color: #fff;
  font-size: 36px;
  font-weight: 700;
  line-height: 40px;
}
.callout p {
  margin: 0 0 0 9px;
  font-family: "Noto Sans CJK JP", sans-serif;
  font-size: 39px;
  font-weight: 700;
  line-height: 46px;
  white-space: nowrap;
  font-feature-settings: normal;
}
.plus { font-weight: 400; }
```
